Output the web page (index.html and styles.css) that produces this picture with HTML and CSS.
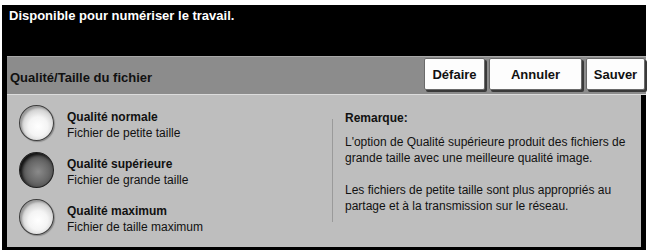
FILE: index.html
```html
<!DOCTYPE html>
<html lang="fr">
<head>
<meta charset="utf-8">
<link rel="stylesheet" href="styles.css">
</head>
<body>
<div class="screen">
  <div class="status">Disponible pour numériser le travail.</div>
  <div class="header">
    <div class="title">Qualité/Taille du fichier</div>
    <div class="buttons">
      <div class="btn btn-undo">Défaire</div>
      <div class="btn btn-cancel">Annuler</div>
      <div class="btn btn-save">Sauver</div>
    </div>
  </div>
  <div class="body">
    <div class="options">
      <div class="option">
        <div class="radio"></div>
        <div class="label"><div class="name">Qualité normale</div><div class="desc">Fichier de petite taille</div></div>
      </div>
      <div class="option">
        <div class="radio selected"></div>
        <div class="label"><div class="name">Qualité supérieure</div><div class="desc">Fichier de grande taille</div></div>
      </div>
      <div class="option">
        <div class="radio"></div>
        <div class="label"><div class="name">Qualité maximum</div><div class="desc">Fichier de taille maximum</div></div>
      </div>
    </div>
    <div class="note">
      <div class="note-title">Remarque:</div>
      <p>L'option de Qualité supérieure produit des fichiers de grande taille avec une meilleure qualité image.</p>
      <p>Les fichiers de petite taille sont plus appropriés au partage et à la transmission sur le réseau.</p>
    </div>
  </div>
</div>
</body>
</html>
```
FILE: styles.css
```css
html, body {
  margin: 0;
  padding: 0;
  background: #ffffff;
}
body {
  padding: 5px 0 0 2px;
  font-family: "Liberation Sans", Arial, sans-serif;
}
.screen {
  width: 644px;
  height: 245px;
  background: #000;
  display: flex;
  flex-direction: column;
  box-sizing: border-box;
  padding: 0 0 3px 5px;
}
.status {
  height: 51px;
  box-sizing: border-box;
  padding: 3px 0 0 2px;
  color: #fff;
  font-weight: bold;
  font-size: 13px;
}
.header {
  height: 39px;
  background: #8c8c8c;
  border-top: 1px solid #a8a8a8;
  border-bottom: 1px solid #dcdcdc;
  box-sizing: border-box;
  display: flex;
  align-items: center;
  justify-content: space-between;
}
.title {
  padding: 3px 0 0 3px;
  font-weight: bold;
  font-size: 13px;
  color: #111;
}
.buttons {
  display: flex;
  gap: 4px;
  align-self: stretch;
  padding: 1px 1px 2px 0;
}
.btn {
  background: #fdfdfd;
  border: 1px solid #6a6a6a;
  border-radius: 2px;
  box-shadow: 2px 2px 0 #3a3a3a;
  font-weight: bold;
  font-size: 13px;
  color: #111;
  display: flex;
  align-items: center;
  justify-content: center;
  box-sizing: border-box;
  height: 32px;
}
.btn-undo { width: 61px; }
.btn-cancel { width: 93px; }
.btn-save { width: 59px; }
.body {
  flex: 1;
  margin-right: 5px;
  background: #bebebe;
  display: flex;
}
.options {
  width: 314px;
  display: flex;
  flex-direction: column;
  padding: 10px 0 0 12px;
  gap: 11px;
}
.option {
  display: flex;
  align-items: center;
  gap: 13px;
}
.radio {
  width: 35px;
  height: 36px;
  border-radius: 50%;
  box-sizing: border-box;
  border: 1px solid #3c3c3c;
  background: radial-gradient(circle at 55% 60%, #ffffff 0%, #f4f4f4 35%, #c8c8c8 70%, #8a8a8a 100%);
  box-shadow: inset 2px 2px 2px #9a9a9a, 1px 1px 1px #8a8a8a;
}
.radio.selected {
  border-color: #202020;
  background: radial-gradient(circle at 55% 55%, #8a8a8a 0%, #6a6a6a 40%, #444 75%, #222 100%);
  box-shadow: inset 2px 2px 3px #111;
}
.label {
  font-size: 12px;
  line-height: 16px;
  padding-top: 4px;
  color: #111;
}
.name {
  font-weight: bold;
}
.note {
  margin-top: 24px;
  border-left: 1px solid #9a9a9a;
  padding-left: 12px;
  height: 103px;
  box-sizing: border-box;
  font-size: 12px;
  line-height: 16px;
  color: #111;
  width: 310px;
}
.note-title {
  font-weight: bold;
  margin-top: -9px;
  margin-bottom: 8px;
}
.note p {
  margin: 0 0 16px 0;
}
```
